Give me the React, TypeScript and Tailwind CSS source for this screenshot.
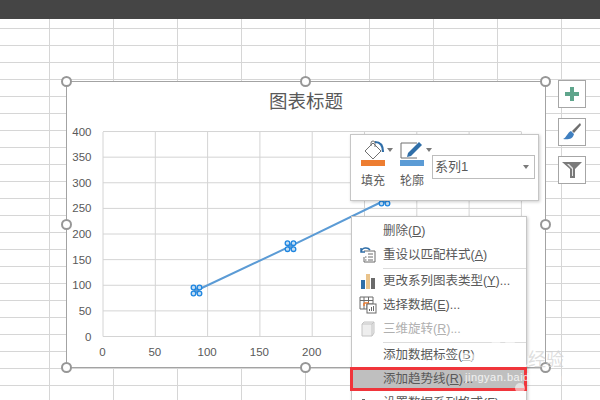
const font = "font-['Liberation_Sans','Noto_Sans_CJK_SC',sans-serif]";

const Cells = () => (
  <div className="grid grid-cols-[50px_repeat(9,64px)] grid-rows-[10px] auto-rows-[17px]">
    {Array.from({ length: 230 }).map((_, i) => (
      <div key={i} className="border-r-[1.5px] border-b-[1.5px] border-[#d6d6d6]" />
    ))}
  </div>
);

const Handle = ({ pos }: { pos: string }) => (
  <div className={`absolute size-[11px] rounded-full border-2 border-[#979797] bg-white ${pos}`} />
);

const Marker = ({ x, y }: { x: number; y: number }) => (
  <g>
    <circle cx={x} cy={y} r="3" fill="#5b9bd5" />
    {[
      [-3, -3],
      [3, -3],
      [-3, 3],
      [3, 3],
    ].map(([dx, dy]) => (
      <circle key={`${dx}${dy}`} cx={x + dx} cy={y + dy} r="2.3" fill="#c4def4" stroke="#1f86e0" strokeWidth="1.3" />
    ))}
  </g>
);

// coordinates are page pixels minus the inside of the chart box (67.5,82.5)
const Plot = () => {
  const xs = [0, 50, 100, 150, 200, 250, 300, 350, 400];
  const ys = [0, 50, 100, 150, 200, 250, 300, 350, 400];
  return (
    <svg width="480" height="287" className="absolute left-0 top-0">
      {xs.map((v, i) => (
        <g key={v}>
          <line x1={36 + i * 52.3} x2={36 + i * 52.3} y1="50" y2="254.5" stroke="#d4d4d4" strokeWidth="1" />
          <text x={35.5 + i * 52.3} y="273.5" textAnchor="middle" fontSize="11.5" fill="#595959" fontFamily="Liberation Sans">
            {i < 5 ? v : ""}
          </text>
        </g>
      ))}
      {ys.map((v, i) => (
        <g key={v}>
          <line x1="36" x2="454.5" y1={254.5 - i * 25.62} y2={254.5 - i * 25.62} stroke="#d4d4d4" strokeWidth="1" />
          <text x="24.5" y={258.5 - i * 25.62} textAnchor="end" fontSize="11.5" fill="#595959" fontFamily="Liberation Sans">
            {v}
          </text>
        </g>
      ))}
      <polyline points="129.5,208.500 223.500,164.200 317.500,118.500" fill="none" stroke="#5b9bd5" strokeWidth="2" />
      <Marker x={129.5} y={208.5} />
      <Marker x={223.5} y={164.2} />
      <Marker x={317.5} y={118.5} />
    </svg>
  );
};

const SideButton = ({ children }: { children: React.ReactNode }) => (
  <div className="flex size-[28px] items-center justify-center border-[1.5px] border-[#a6a6a6] bg-white">{children}</div>
);

const Caret = () => <div className="size-0 border-x-[3.5px] border-t-[4px] border-x-transparent border-t-[#7a7a7a]" />;

const MiniToolbar = () => (
  <div className="absolute left-[350px] top-[134px] flex h-[67px] w-[189px] items-start border border-[#c6c6c6] bg-white pl-[10px] pt-[5px] shadow-[1px_1px_3px_rgba(0,0,0,0.2)]">
    <div className="flex w-[39px] flex-col">
      <div className="flex items-center gap-[1px]">
        <svg width="25" height="20" viewBox="0 0 25 20">
          <path d="M12 3 L20 11 L12 19 L4 11 Z" fill="#fff" stroke="#707070" strokeWidth="1" />
          <path d="M10 6 V3 a2 2 0 0 1 4 0 V7" fill="none" stroke="#707070" />
          <path d="M14 2 C19 2 22 5 22 12" fill="none" stroke="#2f6ea8" strokeWidth="2.200" />
        </svg>
        <Caret />
      </div>
      <div className="h-[6px] w-[24px] bg-[#ed7d31]" />
      <div className="mt-[7px] w-[24px] text-center text-[12px] leading-[16px] whitespace-nowrap text-[#595959]">填充</div>
    </div>
    <div className="flex w-[32px] flex-col">
      <div className="flex items-center gap-[1px]">
        <svg width="25" height="20" viewBox="0 0 25 20">
          <path d="M17 3 H1 V18 H17" fill="none" stroke="#707070" strokeWidth="1" />
          <path d="M7 17 L8 13 L19 2 L22 5 L11 16 Z" fill="#2f6ea8" />
        </svg>
        <Caret />
      </div>
      <div className="h-[6px] w-[24px] bg-[#5b9bd5]" />
      <div className="mt-[7px] w-[24px] text-center text-[12px] leading-[16px] whitespace-nowrap text-[#595959]">轮廓</div>
    </div>
    <div className="mt-[15px] flex h-[24px] w-[103px] items-center justify-between border border-[#bdbdbd] pl-[2px] pr-[5px] text-[13px] text-[#595959]">
      系列1
      <Caret />
    </div>
  </div>
);

const items = [
  { label: "删除", key: "D" },
  { label: "重设以匹配样式", key: "A", icon: "reset" },
  { sep: true },
  { label: "更改系列图表类型", key: "Y", more: true, icon: "bars" },
  { label: "选择数据", key: "E", more: true, icon: "table" },
  { label: "三维旋转", key: "R", more: true, icon: "cube", off: true },
  { sep: true },
  { label: "添加数据标签", key: "B" },
  { label: "添加趋势线", key: "R", more: true, on: true },
  { label: "设置数据系列格式", key: "F", more: true, icon: "format" },
];

const MenuIcon = ({ name }: { name?: string }) => {
  if (name === "reset")
    return (
      <svg width="18" height="18" viewBox="0 0 18 18">
        <path d="M5 5 H16 V16 H5 V11" fill="#fff" stroke="#6a6a6a" />
        <path d="M9 8 H14 M9 11 H14 M9 14 H14 M6 14 H7.5 M6 11 H7.5" stroke="#6a6a6a" />
        <path d="M2 6 C3 1 9 1 11 4 M2 2 V6 H6" fill="none" stroke="#2f6ea8" strokeWidth="1.5" />
      </svg>
    );
  if (name === "bars")
    return (
      <svg width="16" height="16" viewBox="0 0 16 16">
        <rect x="1" y="7" width="4" height="9" fill="#2f6ea8" />
        <rect x="6" y="1" width="4" height="15" fill="#e9c38b" />
        <rect x="11" y="5" width="4" height="11" fill="#6a6a6a" />
      </svg>
    );
  if (name === "table")
    return (
      <svg width="18" height="18" viewBox="0 0 18 18">
        <path d="M1 1 H14 V8 H8 V13 H1 Z" fill="#fff" stroke="#6a6a6a" />
        <path d="M1 4.5 H14 M5 1 V13 M9.500 1 V8" stroke="#6a6a6a" />
        <path d="M5 7 H10 M5 7 V10" stroke="#ed7d31" strokeWidth="1.500" />
        <rect x="8" y="8" width="9" height="9" fill="#fff" stroke="#6a6a6a" />
        <path d="M10.500 15 V13 M12.500 15 V11 M14.500 15 V10" stroke="#6a6a6a" />
      </svg>
    );
  if (name === "cube")
    return (
      <svg width="16" height="16" viewBox="0 0 16 16">
        <path d="M2 3 L4 1 H14 V12 L12 15 H2 Z" fill="#eeeeee" stroke="#c4c4c4" strokeLinejoin="round" />
        <path d="M2 3 H12 V15 M12 3 L14 1" fill="none" stroke="#c4c4c4" />
      </svg>
    );
  if (name === "format")
    return (
      <svg width="16" height="16" viewBox="0 0 16 16">
        <rect x="2" y="4" width="3" height="10" fill="#6a6a6a" />
        <path d="M9 6 L13 10" stroke="#6a6a6a" strokeWidth="1.500" />
      </svg>
    );
  return null;
};

const ContextMenu = () => (
  <div className="absolute left-[351px] top-[216px] w-[176px] border border-[#c6c6c6] bg-white pt-[2px] text-[12.5px] text-[#595959] shadow-[1px_1px_3px_rgba(0,0,0,0.2)]">
    {items.map((item, i) =>
      item.sep ? (
        <div key={i} className="ml-[31px] h-[2px] border-b border-[#dcdcdc]" />
      ) : (
        <div
          key={i}
          className={`flex h-[24px] items-center whitespace-nowrap ${
            item.on ? "-ml-[2px] -mr-px border-[3px] border-[#f0353b] bg-[#bfbfbf]" : ""
          } ${item.off ? "text-[#b0b0b0]" : ""}`}
        >
          <div className={`flex items-center justify-center ${item.on ? "w-[30px]" : "w-[31px]"}`}>
            <MenuIcon name={item.icon} />
          </div>
          {item.label}(<span className="underline">{item.key}</span>){item.more ? "..." : ""}
        </div>
      ),
    )}
  </div>
);

const Watermark = () => (
  <>
    <svg width="60" height="60" className="absolute left-[470px] top-[340px]">
      <g fill="#ffffff" fillOpacity="0.55">
        <circle cx="26" cy="5" r="5" />
        <circle cx="40" cy="4" r="5" />
        <circle cx="50" cy="48" r="5" />
      </g>
    </svg>
    <div className="absolute left-[461px] top-[347px] text-[21px] font-bold leading-[26px] text-white/65">
      Bai<span className="ml-[13px]">du</span>
    </div>
    <div className="absolute left-[528px] top-[349px] text-[18px] leading-[22px] text-[#d0d0d0]/70">经验</div>
    <div className="absolute left-[465px] top-[370px] text-[11px] leading-[14px] tracking-[0.5px] text-white/80">
      jingyan.baidu.com
    </div>
  </>
);

const App = () => {
  return (
    <div className={`relative h-[400px] w-[600px] overflow-hidden bg-white ${font}`}>
      <div className="h-[19px] bg-[#454545]" />
      <Cells />

      <div className="absolute left-[66px] top-[81px] h-[287px] w-[480px] border-[1.5px] border-[#a3a3a3] bg-white">
        <div className="pt-[7px] text-center text-[18.5px] leading-[26px] text-[#595959]">图表标题</div>
        <Plot />
        <Handle pos="-left-[6px] -top-[6px]" />
        <Handle pos="left-[233px] -top-[6px]" />
        <Handle pos="-right-[6px] -top-[6px]" />
        <Handle pos="-left-[6px] top-[137px]" />
        <Handle pos="-right-[6px] top-[137px]" />
        <Handle pos="-left-[6px] -bottom-[6px]" />
        <Handle pos="left-[233px] -bottom-[6px]" />
        <Handle pos="-right-[6px] -bottom-[6px]" />
      </div>

      <div className="absolute left-[558px] top-[80px] flex flex-col gap-[10px]">
        <SideButton>
          <svg width="16" height="16" viewBox="0 0 16 16">
            <path d="M6 1 H10 V6 H15 V10 H10 V15 H6 V10 H1 V6 H6 Z" fill="#5fa58c" />
          </svg>
        </SideButton>
        <SideButton>
          <svg width="22" height="22" viewBox="0 0 22 22">
            <path d="M11 10 L19 2 L20 4 L13 12 Z" fill="#6e6e6e" />
            <path d="M10 10 L13 13 C12 18 7 19 2 18 C6 16 6 12 10 10 Z" fill="#3f7fc0" />
          </svg>
        </SideButton>
        <SideButton>
          <svg width="22" height="20" viewBox="0 0 22 20">
            <path d="M1 2 H21 L14 9 V18 H9 V9 Z" fill="#7a7a7a" />
            <path d="M6 4 L11 9 V16 H12 V8 L8 4 Z" fill="#e6e6e6" />
          </svg>
        </SideButton>
      </div>

      <MiniToolbar />
      <ContextMenu />
      <Watermark />
    </div>
  );
};

export default App;
